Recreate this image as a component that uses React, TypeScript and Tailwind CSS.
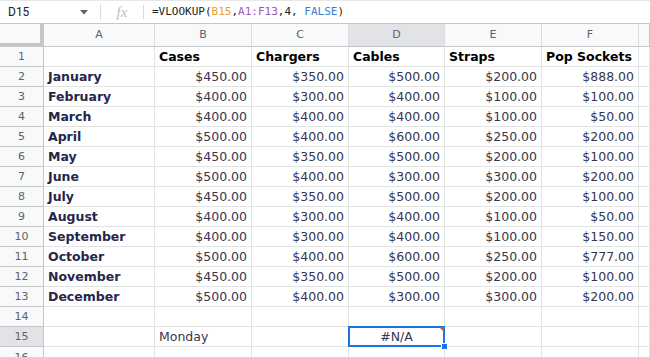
import React from "react";

const cols = ["A", "B", "C", "D", "E", "F", ""];
const headers = ["", "Cases", "Chargers", "Cables", "Straps", "Pop Sockets"];
const data: [string, number[]][] = [
  ["January", [450, 350, 500, 200, 888]],
  ["February", [400, 300, 400, 100, 100]],
  ["March", [400, 400, 400, 100, 50]],
  ["April", [500, 400, 600, 250, 200]],
  ["May", [450, 350, 500, 200, 100]],
  ["June", [500, 400, 300, 300, 200]],
  ["July", [450, 350, 500, 200, 100]],
  ["August", [400, 300, 400, 100, 50]],
  ["September", [400, 300, 400, 100, 150]],
  ["October", [500, 400, 600, 250, 777]],
  ["November", [450, 350, 500, 200, 100]],
  ["December", [500, 400, 300, 300, 200]],
];

const gridCols = "grid grid-cols-[44px_111px_97px_97px_96px_97px_97px_1fr]";
const cell = "h-[20px] pt-[1px] border-r border-b border-[#e2e3e3] flex items-center overflow-hidden whitespace-nowrap";
const rowHead =
  "h-[20px] pt-[1px] border-r border-b border-[#c4c7c5] bg-[#f8f9fa] flex items-center justify-center text-[11px] text-[#5f6368]";

function fmt(n: number) {
  return "$" + n.toFixed(2);
}

export default function App() {
  return (
    <div
      className="w-[650px] h-[357px] overflow-hidden bg-white"
      style={{ fontFamily: "'DejaVu Sans', Verdana, sans-serif" }}
    >
      {/* Formula bar */}
      <div className="h-[24px] border-b border-[#c4c7c5] border-t border-t-[#e8e8e8] flex items-center">
        <div className="w-[100px] flex items-center pl-[8px] pr-[8px] justify-between h-full">
          <span className="text-[12px] text-[#202124]" style={{ fontFamily: "Roboto, Arial, sans-serif" }}>
            D15
          </span>
          <svg width="8" height="5" viewBox="0 0 8 5" className="mr-[4px]">
            <path d="M0 0 L8 0 L4 4.5 Z" fill="#5f6368" />
          </svg>
        </div>
        <div className="w-px h-[16px] bg-[#dadce0]" />
        <div className="w-[42px] flex items-center justify-center">
          <span
            className="text-[15px] italic text-[#bdc1c6]"
            style={{ fontFamily: "'Liberation Serif', 'Times New Roman', serif" }}
          >
            fx
          </span>
        </div>
        <div className="w-px h-[14px] bg-[#dadce0]" />
        <div
          className="pl-[8px] text-[11px] text-[#202124] whitespace-nowrap"
          style={{ fontFamily: "'DejaVu Sans Mono', monospace" }}
        >
          =VLOOKUP(<span className="text-[#f09c29]">B15</span>,<span className="text-[#9c59b6]">A1:F13</span>,4,{" "}
          <span className="text-[#3c7bd6]">FALSE</span>)
        </div>
      </div>

      {/* Column header */}
      <div className={gridCols}>
        <div className="h-[23px] bg-[#f8f9fa] border-r-[4px] border-b-[4px] border-[#c4c7c5]" />
        {cols.map((c, i) => (
          <div
            key={i}
            className={`h-[23px] border-r border-b border-[#c4c7c5] flex items-center justify-center text-[11px] text-[#5f6368] ${
              c === "D" ? "bg-[#e1e3e6]" : "bg-[#f8f9fa]"
            }`}
            style={{ borderRightColor: i === 6 ? "#c4c7c5" : "#dadce0" }}
          >
            {c}
          </div>
        ))}
      </div>

      {/* Row 1 */}
      <div className={gridCols}>
        <div className={rowHead}>1</div>
        {headers.map((h, i) => (
          <div key={i} className={`${cell} pl-[4px] text-[12.5px] font-bold text-black`}>
            {h}
          </div>
        ))}
        <div className={cell} />
      </div>

      {data.map(([m, vals], r) => (
        <div key={m} className={gridCols}>
          <div className={rowHead}>{r + 2}</div>
          <div className={`${cell} pl-[4px] text-[12.5px] font-bold text-[#25264a]`}>{m}</div>
          {vals.map((v, i) => (
            <div key={i} className={`${cell} justify-end pr-[4px] text-[12.5px] text-[#36374f]`}>
              {fmt(v)}
            </div>
          ))}
          <div className={cell} />
        </div>
      ))}

      {/* Row 14 */}
      <div className={gridCols}>
        <div className={rowHead}>14</div>
        {[0, 1, 2, 3, 4, 5, 6].map((i) => (
          <div key={i} className={cell} />
        ))}
      </div>

      {/* Row 15 */}
      <div className={gridCols}>
        <div className={`${rowHead} !bg-[#e1e3e6]`}>15</div>
        <div className={cell} />
        <div className={`${cell} pl-[4px] text-[12.5px] text-[#36374f]`}>Monday</div>
        <div className={cell} />
        <div className="relative h-[20px] border-b border-r border-[#e2e3e3]">
          <div className="absolute -left-[1px] -top-[1px] right-[-1px] bottom-[-1px] pt-[1px] border-2 border-[#1a73e8] flex items-center justify-center text-[12.5px] text-[#36374f]">
            #N/A
          </div>
          <svg className="absolute right-[0px] top-[0px]" width="5" height="5" viewBox="0 0 5 5">
            <path d="M0 0 L5 0 L5 5 Z" fill="#ea4335" />
          </svg>
          <div className="absolute right-[-4px] bottom-[-4px] w-[7px] h-[7px] bg-[#1a73e8] border border-white" />
        </div>
        <div className={cell} />
        <div className={cell} />
        <div className={cell} />
      </div>

      {/* Row 16 */}
      <div className={gridCols}>
        <div className={`${rowHead} items-start pt-[3px]`}>16</div>
        {[0, 1, 2, 3, 4, 5, 6].map((i) => (
          <div key={i} className={cell} />
        ))}
      </div>
    </div>
  );
}
